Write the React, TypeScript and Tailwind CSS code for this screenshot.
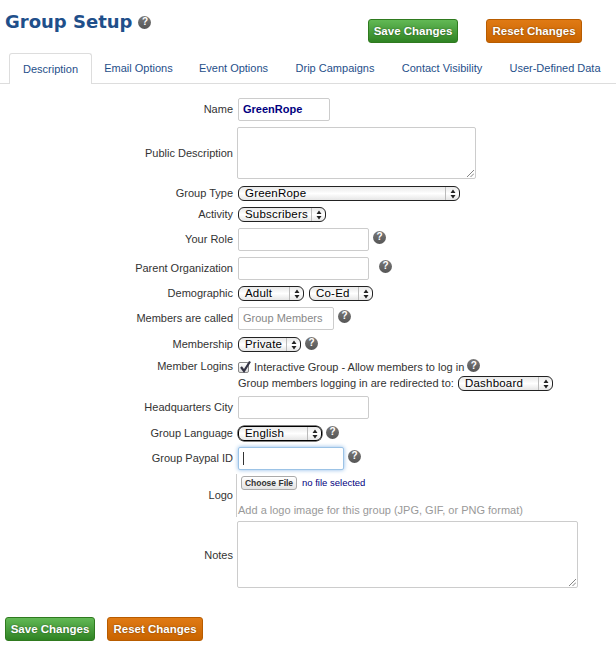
import React from "react";

function Help({ className = "" }: { className?: string }) {
  return (
    <span className={"flex h-[13px] w-[13px] shrink-0 items-center justify-center rounded-full bg-gradient-to-b from-[#7a7a7a] to-[#555] text-[10px] font-bold leading-none text-white " + className}>?</span>
  );
}

function Sel({ text, w, dark = false }: { text: string; w: string; dark?: boolean }) {
  return (
    <div className={"flex h-[15px] shrink-0 items-center rounded-[6px] border border-[#222] bg-gradient-to-b from-[#e8e8e8] via-white to-[#e6e6e6] text-[11.5px] leading-none text-black " + w + (dark ? " border-black shadow-[0_0_0_0.5px_#000]" : "")}>
      <span className="min-w-0 flex-1 pl-[6px] tracking-[0.2px]">{text}</span>
      <span className="flex h-full w-[14px] shrink-0 items-center justify-center border-l border-[#bbb]">
        <svg width="6" height="10" viewBox="0 0 6 10"><path d="M3 0.5L5.5 4H0.5zM3 9.5L0.5 6H5.5z" fill="#222" /></svg>
      </span>
    </div>
  );
}

function Input({ w, children, focus = false }: { w: string; children?: React.ReactNode; focus?: boolean }) {
  return (
    <div className={"flex h-[23px] shrink-0 items-center rounded-[2px] border bg-white pl-[4px] text-[11px] " + w + (focus ? " border-[#9cc3e6] shadow-[0_0_4px_#8ab8e8]" : " border-[#ccc]")}>
      {children}
    </div>
  );
}

function Row({ label, mt, children, align = "items-center", lift = "-translate-y-px" }: { label: string; mt: string; children: React.ReactNode; align?: string; lift?: string }) {
  return (
    <div className={"flex " + align + " " + mt}>
      <div className={"w-[233px] shrink-0 text-right text-[11px] leading-[14px] text-[#333] " + lift}>{label}</div>
      <div className="ml-[5px] flex min-w-0 items-center">{children}</div>
    </div>
  );
}

function Resize() {
  return (
    <svg className="absolute bottom-[1px] right-[1px]" width="8" height="8" viewBox="0 0 8 8">
      <path d="M1 8L8 1M4.5 8L8 4.5" stroke="#666" strokeWidth="0.8" fill="none" />
    </svg>
  );
}

function Btn({ text, color, w }: { text: string; color: "green" | "orange"; w: string }) {
  const c = color === "green"
    ? "border-[#2f7a1f] bg-gradient-to-b from-[#62b955] to-[#2f8323]"
    : "border-[#b85c00] bg-gradient-to-b from-[#e07a14] to-[#c96400]";
  return (
    <button className={"flex h-[24px] items-center justify-center rounded-[3px] border pt-[1px] text-[11.5px] font-bold text-white [text-shadow:0_0_2px_rgba(0,0,0,0.45)] " + c + " " + w}>{text}</button>
  );
}

const tabs = ["Email Options", "Event Options", "Drip Campaigns", "Contact Visibility", "User-Defined Data"];
const tabW = ["w-[93px]", "w-[97px]", "w-[106px]", "w-[108px]", "w-[118px]"];

export default function App() {
  return (
    <div className="h-[651px] w-[616px] overflow-hidden bg-white font-['Liberation_Sans',Arial,sans-serif]">
      <div className="flex h-[53px] items-start pl-[5px]">
        <div className="mt-[10px] flex items-center">
          <h1 className="font-['DejaVu_Sans',sans-serif] text-[18px] font-bold leading-[24px] text-[#1f4f8a]">Group Setup</h1>
          <Help className="ml-[6px]" />
        </div>
        <div className="ml-auto mr-[34px] mt-[19px] flex gap-[28px]">
          <Btn text="Save Changes" color="green" w="w-[90px]" />
          <Btn text="Reset Changes" color="orange" w="w-[96px]" />
        </div>
      </div>

      <div className="flex h-[31px] border-b border-[#ddd] pl-[9px] text-[11px]">
        <div className="z-10 flex h-[31px] w-[83px] items-center justify-center rounded-t-[3px] border border-b-0 border-[#ddd] bg-white text-[#1f4f8a]">Description</div>
        {tabs.map((t, i) => (
          <div key={t} className={"flex h-[30px] items-center justify-center text-[#1f4f8a] " + tabW[i]}>{t}</div>
        ))}
      </div>

      <Row label="Name" mt="mt-[14px]">
        <Input w="w-[92px]"><span className="font-bold text-[#000080]">GreenRope</span></Input>
      </Row>
      <Row label="Public Description" mt="mt-[6px]" lift="">
        <div className="relative -ml-px h-[52px] w-[239px] rounded-[2px] border border-[#ccc] bg-white"><Resize /></div>
      </Row>
      <Row label="Group Type" mt="mt-[7px]"><Sel text="GreenRope" w="w-[222px]" /></Row>
      <Row label="Activity" mt="mt-[6px]"><Sel text="Subscribers" w="w-[88px]" /></Row>
      <Row label="Your Role" mt="mt-[6px]">
        <Input w="w-[131px]" /><Help className="ml-[4px] mt-[-5px]" />
      </Row>
      <Row label="Parent Organization" mt="mt-[6px]">
        <Input w="w-[131px]" /><Help className="ml-[10px] mt-[-5px]" />
      </Row>
      <Row label="Demographic" mt="mt-[6px]">
        <Sel text="Adult" w="w-[66px]" /><div className="ml-[5px]"><Sel text="Co-Ed" w="w-[64px]" /></div>
      </Row>
      <Row label="Members are called" mt="mt-[6px]">
        <Input w="w-[96px]"><span className="text-[#888]">Group Members</span></Input>
        <Help className="ml-[4px] mt-[-5px]" />
      </Row>
      <Row label="Membership" mt="mt-[7px]">
        <Sel text="Private" w="w-[63px]" /><Help className="ml-[4px] mt-[-3px]" />
      </Row>
      <Row label="Member Logins" mt="mt-[7px]" align="items-start" lift="">
        <div className="flex flex-col">
          <div className="flex h-[16px] items-center text-[11px] text-[#333]">
            <span className="relative flex h-[11px] w-[11px] items-center justify-center rounded-[2px] border border-[#888] bg-gradient-to-b from-white to-[#ddd]">
              <svg className="absolute left-[0px] top-[-3px]" width="13" height="13" viewBox="0 0 13 13"><path d="M2 7l3 4L11 1.5" fill="none" stroke="#334" strokeWidth="2.2" /></svg>
            </span>
            <span className="ml-[5px] whitespace-nowrap">Interactive Group - Allow members to log in</span>
            <Help className="ml-[3px] mt-[-3px]" />
          </div>
          <div className="mt-[1px] flex h-[15px] items-center text-[11px] text-[#333]">
            <span className="w-[220px] whitespace-nowrap">Group members logging in are redirected to:</span>
            <Sel text="Dashboard" w="w-[95px]" />
          </div>
        </div>
      </Row>
      <Row label="Headquarters City" mt="mt-[5px]"><Input w="w-[131px]" /></Row>
      <Row label="Group Language" mt="mt-[7px]">
        <Sel text="English" w="w-[84px]" dark /><Help className="ml-[4px] mt-[-3px]" />
      </Row>
      <Row label="Group Paypal ID" mt="mt-[6px]">
        <Input w="w-[106px]" focus><span className="h-[13px] w-px bg-[#333]" /></Input>
        <Help className="ml-[4px] mt-[-5px]" />
      </Row>
      <Row label="Logo" mt="mt-[4px]">
        <div className="-ml-[2px] h-[43px] w-[330px] border-l border-[#ccc] pl-[4px]">
          <div className="mt-[2px] flex h-[14px] items-center">
            <span className="flex h-[14px] w-[56px] items-center justify-center rounded-[3px] border border-[#aaa] bg-gradient-to-b from-white to-[#e4e4e4] text-[8.5px] font-bold text-[#333]">Choose File</span>
            <span className="ml-[5px] text-[9.5px] text-[#000080]">no file selected</span>
          </div>
          <div className="-ml-[4px] mt-[13px] pl-[1px] text-[11px] leading-[14px] text-[#999]">Add a logo image for this group (JPG, GIF, or PNG format)</div>
        </div>
      </Row>
      <Row label="Notes" mt="mt-[4px]" lift="">
        <div className="relative -ml-px h-[67px] w-[341px] rounded-[2px] border border-[#ccc] bg-white"><Resize /></div>
      </Row>
      <div className="ml-[5px] mt-[29px] flex gap-[12px]">
        <Btn text="Save Changes" color="green" w="w-[90px]" />
        <Btn text="Reset Changes" color="orange" w="w-[96px]" />
      </div>
    </div>
  );
}
